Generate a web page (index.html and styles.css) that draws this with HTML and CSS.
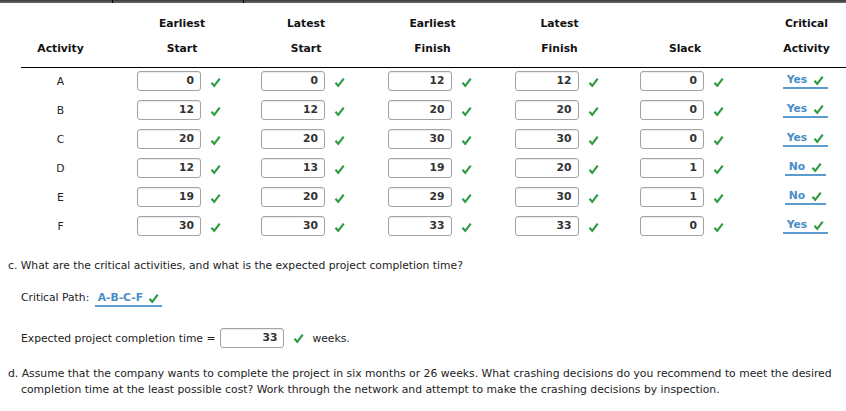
FILE: index.html
```html
<!DOCTYPE html>
<html>
<head>
<meta charset="utf-8">
<link rel="stylesheet" href="styles.css">
</head>
<body>
<div class="topbar"><div class="seg seg1"></div><div class="seg seg2"></div><div class="seg seg3"></div></div>

<div class="grid head">
  <div></div><div>Earliest</div><div>Latest</div><div>Earliest</div><div>Latest</div><div></div><div>Critical</div>
  <div>Activity</div><div>Start</div><div>Start</div><div>Finish</div><div>Finish</div><div>Slack</div><div>Activity</div>
</div>
<div class="rule"></div>

<div class="grid body" id="rows"></div>

<p class="qc">c. What are the critical activities, and what is the expected project completion time?</p>
<div class="cp">Critical Path: <span class="sel">A-B-C-F <svg class="chk" viewBox="0 0 12 12"><path d="M1.6 6.4 L4.6 9.6 L10.6 1.8"/></svg></span></div>
<div class="exp"><span>Expected project completion time =</span><span class="box">33</span><svg class="chk" viewBox="0 0 12 12"><path d="M1.6 6.4 L4.6 9.6 L10.6 1.8"/></svg><span>weeks.</span></div>
<p class="qd">d. Assume that the company wants to complete the project in six months or 26 weeks. What crashing decisions do you recommend to meet the desired completion time at the least possible cost? Work through the network and attempt to make the crashing decisions by inspection.</p>

<script src="app.js"></script>
</body>
</html>
```
FILE: app.js
```js
var data = [
  ["A",0,0,12,12,0,"Yes"],
  ["B",12,12,20,20,0,"Yes"],
  ["C",20,20,30,30,0,"Yes"],
  ["D",12,13,19,20,1,"No"],
  ["E",19,20,29,30,1,"No"],
  ["F",30,30,33,33,0,"Yes"]
];
var chk = '<svg class="chk" viewBox="0 0 12 12"><path d="M1.6 6.4 L4.6 9.6 L10.6 1.8"/></svg>';
var html = "";
data.forEach(function(r){
  html += '<div class="cell act">' + r[0] + '</div>';
  for (var i = 1; i <= 5; i++) {
    html += '<div class="cell"><span class="box">' + r[i] + '</span>' + chk + '</div>';
  }
  html += '<div class="cell crit"><span class="sel">' + r[6] + ' ' + chk + '</span></div>';
});
document.getElementById("rows").innerHTML = html;
```
FILE: styles.css
```css
html, body { margin: 0; padding: 0; background: #fff; }
body {
  font-family: "DejaVu Sans", Verdana, sans-serif;
  font-size: 10.75px;
  color: #222;
  overflow: hidden;
}
.topbar { display: flex; height: 3px; }
.seg { height: 3px; background: linear-gradient(#3c3c3c, #6a6a6a); }
.seg1 { width: 112px; }
.seg2 { width: 130px; border-left: 1px solid #000; }
.seg3 { flex: 1; border-left: 1px solid #000; }

.grid {
  display: grid;
  grid-template-columns: 121px 122px 126px 127px 127px 124px 99px;
}
.head { padding-top: 8px; padding-bottom: 6px; font-weight: bold; color: #111; }
.head > div { height: 25px; line-height: 25px; text-align: center; }
.head > div:nth-child(7n) { padding-left: 20px; }
.rule { margin-left: 21px; border-top: 1px solid #000; }

.cell {
  height: 29px;
  box-sizing: border-box;
  padding-top: 3px;
  padding-right: 6px;
  display: flex;
  justify-content: center;
  align-items: flex-start;
  gap: 9px;
}
.cell.act { line-height: 22px; padding-right: 0; }
.box {
  display: inline-block;
  box-sizing: border-box;
  width: 64px;
  height: 20px;
  border: 1px solid #a3a3a3;
  border-radius: 3px;
  box-shadow: inset 0 1px 1px rgba(0,0,0,0.08);
  text-align: right;
  padding-right: 6px;
  line-height: 18px;
  font-weight: bold;
  color: #333;
}
.chk { width: 11px; height: 11px; margin-top: 6px; flex: none; }
.chk path { fill: none; stroke: #2f9c44; stroke-width: 2.4; stroke-linejoin: miter; }
.sel {
  display: inline-flex;
  align-items: center;
  gap: 6px;
  font-weight: bold;
  color: #4a8ec6;
  border-bottom: 2px solid #5b9bd0;
  padding: 0 4px;
  height: 14px;
  line-height: 14px;
  vertical-align: top;
}
.sel .chk { margin-top: 0; }
.crit { padding-left: 18px; padding-right: 0; }
.crit .sel { margin-top: 2px; }

.qc { margin: 17px 0 0 8px; line-height: 14px; }
.cp { margin: 18px 0 0 21px; line-height: 14px; height: 16px; }
.cp .sel { padding: 0 3px; gap: 5px; margin-left: 2px; }
.exp {
  margin: 21px 0 0 21px;
  display: flex;
  align-items: center;
  height: 20px;
}
.exp .box { margin-left: 5px; }
.exp .chk { margin: 0 8px 0 9px; }
.qd {
  margin: 18px 0 0 0;
  padding-left: 21px;
  text-indent: -13px;
  line-height: 16px;
  font-size: 10.8px;
}
```
